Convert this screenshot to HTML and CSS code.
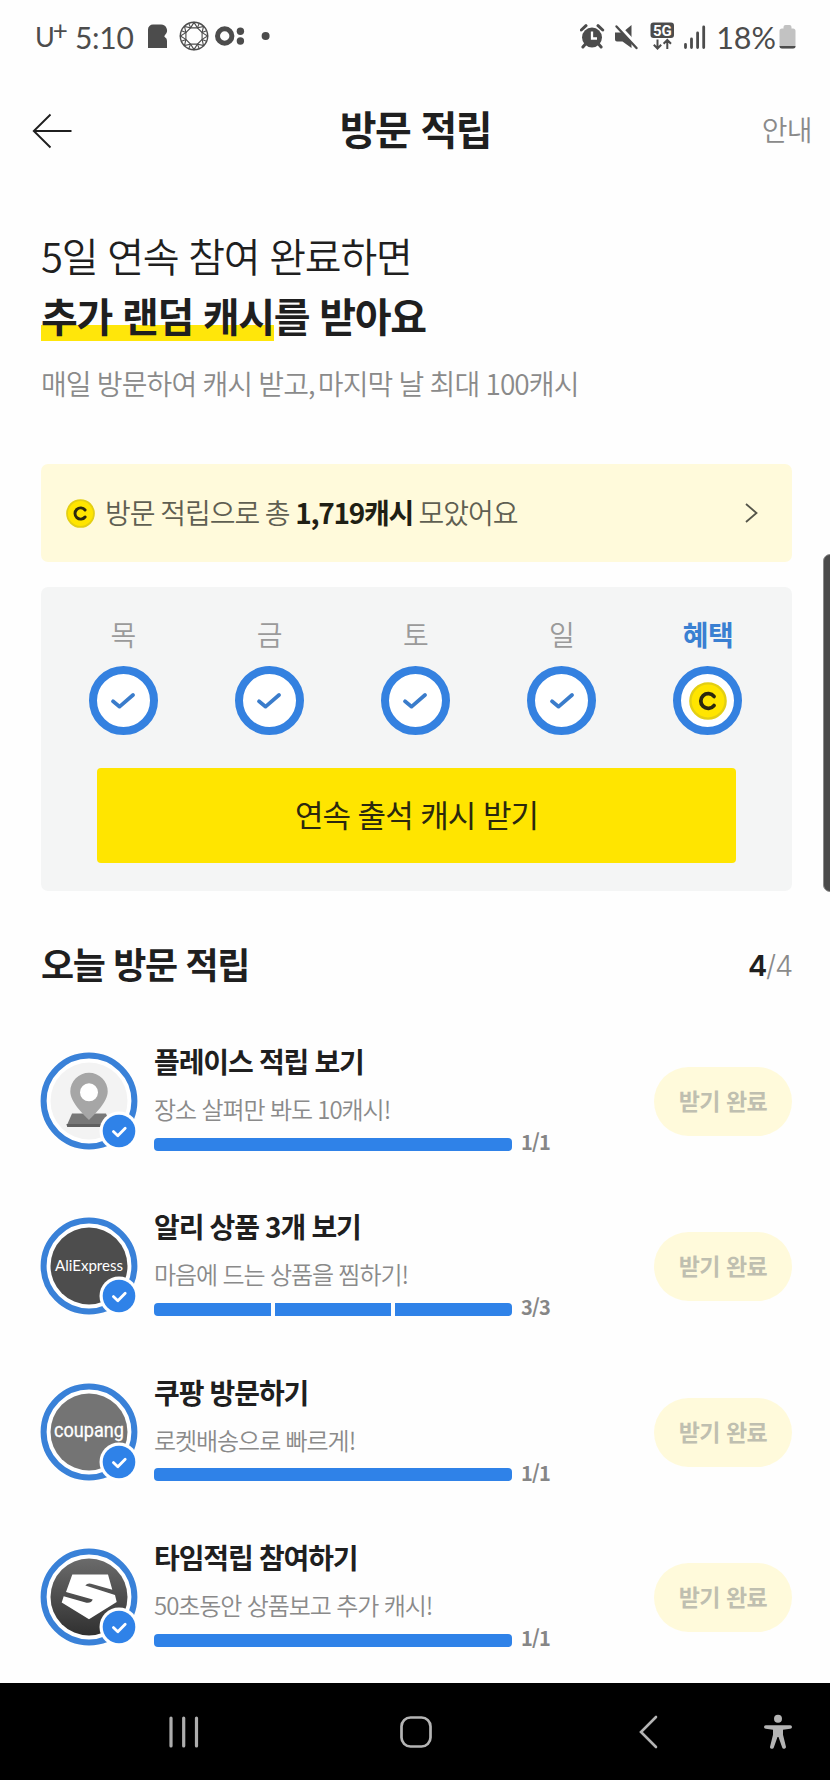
FILE: index.html
```html
<!DOCTYPE html>
<html lang="ko">
<head>
<meta charset="utf-8">
<title>방문 적립</title>
<link rel="stylesheet" href="styles.css">
</head>
<body>
<svg width="0" height="0" class="defs">
  <defs>
    <linearGradient id="dark" x1="0" y1="0" x2="0" y2="1"><stop offset="0" stop-color="#6b6b6b"/><stop offset="1" stop-color="#303030"/></linearGradient>
    <symbol id="coin" viewBox="0 0 38 38">
      <circle cx="19" cy="19" r="17.6" fill="#ffe500" stroke="#e3cf14" stroke-width="2.4"/>
      <path d="M25 14.4A7.4 7.4 0 1 0 25 23.6" fill="none" stroke="#2b280e" stroke-width="3.8" stroke-linecap="round"/>
    </symbol>
    <symbol id="check" viewBox="0 0 24 16"><path d="M2 8.3l6.6 5.4L22 2" fill="none" stroke="currentColor" stroke-width="3.7" stroke-linecap="round" stroke-linejoin="round"/></symbol>
    <symbol id="ring" viewBox="0 0 98 98">
      <circle cx="49" cy="49" r="45.4" fill="#fff" stroke="#3981d8" stroke-width="6"/>
    </symbol>
    <symbol id="done" viewBox="0 0 98 98">
      <circle cx="79" cy="79" r="19.5" fill="#fff"/>
      <circle cx="79" cy="79" r="16.3" fill="#2f82e8"/>
      <path d="M73.400 79.600l4.400 4.200 7.400-7.600" fill="none" stroke="#fff" stroke-width="2.800" stroke-linecap="round" stroke-linejoin="round"/>
    </symbol>
  </defs>
</svg>
<div class="screen">
  <div class="status">
    <div class="status-left">
      <span class="carrier">U<span class="plus">+</span></span><span class="clock">5:10</span>
      <svg class="notif" width="124" height="32" viewBox="0 0 124 32" fill="#4c4c4c">
        <path d="M0 27V8.500a5 5 0 0 1 5-5h8a6 6 0 0 1 4.200 10.300Q15.400 15.300 17 16.300A4 4 0 0 1 19 20v7z"/>
        <g fill="none" stroke="#4c4c4c" stroke-width="1.100">
          <circle cx="46" cy="15" r="13.700" stroke-width="1.400"/>
          <path d="M42.600 6.900h6.800l4.700 4.700v6.800l-4.700 4.700h-6.800l-4.700-4.700v-6.800z"/>
          <path d="M42.600 6.900L46 1.400l3.400 5.500 6.100-1.500-1.400 6.200 5.500 3.400-5.500 3.400 1.400 6.200-6.100-1.500-3.400 5.500-3.400-5.500-6.100 1.500 1.400-6.200-5.500-3.400 5.500-3.400-1.400-6.200z"/>
          <path d="M42.600 6.900l-1.800-4.500M49.400 6.900l1.800-4.500M54.100 11.600l4.400-1.900M54.100 18.400l4.400 1.900M49.400 23.100l1.800 4.500M42.600 23.100l-1.800 4.500M37.900 18.400l-4.400 1.900M37.900 11.600l-4.400-1.900"/>
        </g>
        <circle cx="76.700" cy="15" r="7.200" fill="none" stroke="#4c4c4c" stroke-width="5"/>
        <circle cx="92.400" cy="10.300" r="3.700"/><circle cx="92.400" cy="20" r="3.700"/>
        <circle cx="117.600" cy="15" r="4"/>
      </svg>
    </div>
    <div class="status-right">
      <svg width="128" height="30" viewBox="0 0 128 30" fill="#4c4c4c">
        <circle cx="12" cy="15.500" r="10"/>
        <path d="M1.300 8L6 3.700M22.700 8L18 3.700M5.500 22l-2.600 3M18.500 22l2.600 3" stroke="#4c4c4c" stroke-width="3" stroke-linecap="round"/>
        <path d="M12 9.500v7h5" stroke="#fff" stroke-width="2.300" fill="none"/>
        <path d="M35 10.500h7.500L51.500 3v23L42.500 19.500H37q-2 0-2-2z"/>
        <path d="M37.500 2.500L58.500 25" stroke="#fff" stroke-width="3.500"/>
        <path d="M36.500 4.500L56.500 26" stroke="#4c4c4c" stroke-width="2.400" stroke-linecap="round"/>
        <rect x="70.500" y=".5" width="23.500" height="15.500" rx="3"/>
        <text x="82.300" y="13.700" class="net" text-anchor="middle">5G</text>
        <path d="M77.500 17.500v9M73.800 22.800l3.700 3.700 3.700-3.700M87.300 27v-9M83.600 21.700l3.700-3.700 3.700 3.700" fill="none" stroke="#4c4c4c" stroke-width="2"/>
        <path d="M105.500 22.500v3M111.500 17v8.500M117.600 11v14.500M123.700 5v20.500" stroke="#4c4c4c" stroke-width="2.800" stroke-linecap="round"/>
      </svg>
      <span class="percent">18%</span>
      <svg width="17" height="24" viewBox="0 0 17 24"><path d="M4.500 2a2 2 0 0 1 2-2h4a2 2 0 0 1 2 2v1.500h1.500a2.500 2.500 0 0 1 2.500 2.500V21a2.500 2.500 0 0 1-2.500 2.500H3A2.500 2.500 0 0 1 .5 21V6A2.500 2.500 0 0 1 3 3.500h1.500z" fill="#c2c2c2"/><path d="M.5 21h16q0 2.500-2.500 2.500H3Q.5 23.500.5 21z" fill="#4c4c4c"/></svg>
    </div>
  </div>

  <header class="header">
    <svg class="back" width="41" height="36" viewBox="0 0 41 36"><path d="M39.500 18H2M18.500 1.500L1.800 18l16.700 16.500" fill="none" stroke="#1f1f1f" stroke-width="1.900"/></svg>
    <h1 class="title">방문 적립</h1>
    <span class="guide">안내</span>
  </header>

  <section class="intro">
    <p class="lead">5일 연속 참여 완료하면</p>
    <p class="lead strong"><span class="mark">추가 랜덤 캐시</span>를 받아요</p>
    <p class="sub">매일 방문하여 캐시 받고<span class="comma">,</span> 마지막 날 최대 100캐시</p>
  </section>

  <a class="total">
    <svg width="29" height="29"><use href="#coin"/></svg>
    <span class="total-text">방문 적립으로 총 <b>1,719캐시</b> 모았어요</span>
    <svg class="chev" width="13" height="20" viewBox="0 0 13 20"><path d="M1 1l10.500 9L1 19" fill="none" stroke="#55554a" stroke-width="1.800"/></svg>
  </a>

  <section class="streak">
    <div class="days">
      <div class="day"><span>목</span><div class="dot"><svg width="24" height="16"><use href="#check"/></svg></div></div>
      <div class="day"><span>금</span><div class="dot"><svg width="24" height="16"><use href="#check"/></svg></div></div>
      <div class="day"><span>토</span><div class="dot"><svg width="24" height="16"><use href="#check"/></svg></div></div>
      <div class="day"><span>일</span><div class="dot"><svg width="24" height="16"><use href="#check"/></svg></div></div>
      <div class="day bonus"><span>혜택</span><div class="dot"><svg width="38" height="38"><use href="#coin"/></svg></div></div>
    </div>
    <div class="claim">연속 출석 캐시 받기</div>
  </section>

  <div class="list-head"><h2>오늘 방문 적립</h2><span class="count"><b>4</b>/4</span></div>

  <section class="missions">
    <div class="mission">
      <svg class="avatar" viewBox="0 0 98 98"><use href="#ring"/>
        <circle cx="49" cy="49" r="38.500" fill="#f3f3f3"/>
        <path d="M32 61.500h34l5 12V75H27v-2z" fill="#787878"/><path d="M26.500 72h45v2q0 1-1.500 1H29q-2.500 0-2.500-3z" fill="#606060"/>
        <path d="M49 68C43 62 30.300 50 30.300 39.500a18.700 18.700 0 0 1 37.400 0C67.700 50 55 62 49 68z" fill="#a6a6a6"/>
        <circle cx="49" cy="40.300" r="9" fill="#fff"/><use href="#done"/></svg>
      <div class="body"><h3>플레이스 적립 보기</h3><p>장소 살펴만 봐도 10캐시!</p>
        <div class="progress"><div class="bar"><i></i></div><span>1/1</span></div></div>
      <div class="pill">받기 완료</div>
    </div>
    <div class="mission">
      <svg class="avatar" viewBox="0 0 98 98"><use href="#ring"/>
        <circle cx="49" cy="49" r="38.500" fill="#4d4d4d"/>
        <text x="49" y="53.500" text-anchor="middle" textLength="68" lengthAdjust="spacingAndGlyphs" class="ali">AliExpress</text><use href="#done"/></svg>
      <div class="body"><h3>알리 상품 3개 보기</h3><p>마음에 드는 상품을 찜하기!</p>
        <div class="progress"><div class="bar"><i></i><i></i><i></i></div><span>3/3</span></div></div>
      <div class="pill">받기 완료</div>
    </div>
    <div class="mission">
      <svg class="avatar" viewBox="0 0 98 98"><use href="#ring"/>
        <circle cx="49" cy="49" r="38.500" fill="#747474"/>
        <text x="49" y="54" text-anchor="middle" textLength="70" lengthAdjust="spacingAndGlyphs" class="coupang">coupang</text><use href="#done"/></svg>
      <div class="body"><h3>쿠팡 방문하기</h3><p>로켓배송으로 빠르게!</p>
        <div class="progress"><div class="bar"><i></i></div><span>1/1</span></div></div>
      <div class="pill">받기 완료</div>
    </div>
    <div class="mission">
      <svg class="avatar" viewBox="0 0 98 98"><use href="#ring"/>
        <circle cx="49" cy="49" r="38.500" fill="url(#dark)"/>
        <path d="M32.300 26.500H68L72.300 41.700 51 35.700q-3.700-.8-5.700 1.800L75 46.900l1.700 7L49 71.300 21.700 54.500l2-6.200L46.500 54.700q4.700.8 6.200-3.200L26 43.900z" fill="#fff"/><use href="#done"/></svg>
      <div class="body"><h3>타임적립 참여하기</h3><p>50초동안 상품보고 추가 캐시!</p>
        <div class="progress"><div class="bar"><i></i></div><span>1/1</span></div></div>
      <div class="pill">받기 완료</div>
    </div>
  </section>

  <nav class="nav">
    <svg width="30" height="32" viewBox="0 0 30 32"><path d="M2 2v28M14.700 2v28M27.500 2v28" stroke="#adadad" stroke-width="3.200" stroke-linecap="round"/></svg>
    <svg width="32" height="32" viewBox="0 0 32 32"><rect x="1.500" y="1.500" width="29" height="29" rx="9" fill="none" stroke="#b4b4b4" stroke-width="2.700"/></svg>
    <svg width="19" height="34" viewBox="0 0 19 34"><path d="M17 2L2 17l15 15" fill="none" stroke="#b4b4b4" stroke-width="2.600" stroke-linecap="round"/></svg>
    <svg width="28" height="35" viewBox="0 0 28 35" fill="#b4b4b4"><circle cx="14" cy="4.700" r="4"/><path d="M1.800 11.200h24.400a1.800 1.800 0 0 1 0 3.600L19 15.800v5l2.900 11.600a1.900 1.900 0 0 1-3.700 1L14.500 23h-1l-3.700 10.400a1.900 1.900 0 0 1-3.700-1L9 20.800v-5l-7.200-1a1.800 1.800 0 0 1 0-3.600z"/></svg>
  </nav>
  <div class="edge"></div>
</div>
</body>
</html>
```
FILE: styles.css
```css
* { box-sizing: border-box; margin: 0; padding: 0; }
body { background: #fefefe; font-family: "Noto Sans CJK KR", sans-serif; color: #1f1f1f; }
svg { display: block; flex: none; }
.defs { position: absolute; }
.screen { position: relative; width: 830px; height: 1780px; display: flex; flex-direction: column; overflow: hidden; white-space: nowrap; }
.screen > * { flex-shrink: 0; }
.status { height: 74px; display: flex; justify-content: space-between; padding: 0 34px 0 35px; color: #4c4c4c; font-family: Lato, sans-serif; font-size: 30px; line-height: 74px; }
.status-left, .status-right { display: flex; align-items: center; }
.carrier { width: 40px; font-size: 27px; letter-spacing: -2px; }
.plus { font-size: 26px; position: relative; top: -7px; }
.clock { width: 73px; letter-spacing: -0.3px; }
.status-right .percent { margin: 0 3px 0 8px; font-size: 30.5px; }
.net { font: bold 15px Roboto, sans-serif; fill: #fff; }

.header { height: 114px; display: grid; grid-template-columns: 140px 1fr 140px; align-items: center; padding: 0 18px; }
.back { margin-left: 14px; }
.title { text-align: center; font-size: 40px; line-height: 60px; letter-spacing: -1.35px; padding: 0 0 6px 1px; }
.guide { text-align: right; font-size: 28px; letter-spacing: -0.6px; color: #8a8a8a; font-weight: 350; padding-bottom: 5px; }

.intro { padding: 37px 41px 0; }
.lead { font-size: 40px; line-height: 60px; letter-spacing: -1.25px; font-weight: 350; }
.strong { font-weight: 700; letter-spacing: -1.3px; }
.mark { background: linear-gradient(#ffe60a, #ffe60a) 0 39px / 100% 16px no-repeat; }
.sub { margin-top: 17px; font-size: 28px; line-height: 42px; letter-spacing: -0.9px; word-spacing: -0.8px; color: #8a8a8a; font-weight: 350; }
.comma { margin-right: -3px; }

.total { margin: 60px 38px 0 41px; height: 98px; border-radius: 7px; background: #fffadb; display: flex; align-items: center; padding: 0 34px 0 25px; }
.total-text { flex: 1; margin-left: 10px; padding-bottom: 2px; font-size: 28px; letter-spacing: -1px; word-spacing: -1.2px; color: #5f5f52; font-weight: 350; }
.total-text b { color: #1f1f14; font-weight: 700; letter-spacing: -1.3px; }

.streak { margin: 25px 38px 0 41px; height: 304px; border-radius: 7px; background: #f4f5f5; padding: 26px 11px 0 9px; }
.days { display: grid; grid-template-columns: repeat(5, 1fr); }
.day { display: flex; flex-direction: column; align-items: center; font-size: 28px; line-height: 42px; color: #9a9a9a; font-weight: 350; letter-spacing: -0.6px; }
.bonus { color: #3a80d2; font-weight: 700; }
.dot { margin-top: 11px; width: 69px; height: 69px; border-radius: 50%; border: 8px solid #3481e0; background: #fff; display: flex; align-items: center; justify-content: center; color: #3a7ccb; }
.claim { margin: 33px 45px 0 47px; height: 95px; border-radius: 4px; background: #ffe500; text-align: center; font-size: 31px; line-height: 91px; letter-spacing: -1px; color: #2b280e; }

.list-head { margin: 47px 38px 0 41px; height: 54px; display: flex; justify-content: space-between; align-items: center; }
h2 { font-size: 36px; letter-spacing: -1.35px; line-height: 54px; padding-bottom: 4px; }
.count { font-size: 29px; font-family: Inter, sans-serif; letter-spacing: -1.2px; font-weight: 300; color: #8a8a8a; }
.count b { color: #1f1f1f; font-weight: 600; }

.screen > .missions { padding: 41px 38px 0 41px; flex: 1 1 0; min-height: 0; overflow: hidden; }
.mission { height: 165.400px; display: flex; align-items: flex-start; }
.avatar { width: 98px; height: 98px; margin: 19px 1px 0 -1px; }
.body { width: 420px; margin-left: 15px; padding-top: 7px; }
h3 { font-size: 28px; line-height: 42px; letter-spacing: -1.1px; word-spacing: -0.5px; }
.body p { margin-top: 9px; font-size: 24px; line-height: 36px; letter-spacing: -1.05px; word-spacing: -0.3px; color: #8a8a8a; font-weight: 350; }
.progress { display: flex; align-items: center; height: 32px; margin-top: 1px; }
.bar { width: 358px; height: 13px; border-radius: 4px; overflow: hidden; display: flex; gap: 4px; }
.bar i { flex: 1; background: #2f82e8; }
.progress span { margin: -5px 0 0 9px; font-size: 20px; letter-spacing: -0.8px; color: #868686; font-weight: 700; }
.pill { margin: 34px 0 0 auto; width: 138px; height: 69px; border-radius: 35px; background: #fffadb; text-align: center; font-size: 23px; line-height: 66px; letter-spacing: -0.5px; font-weight: 700; color: #bfbfb0; }
.ali { font: 15.500px Lato, sans-serif; fill: #fff; }
.coupang { font: 400 20.500px Roboto, sans-serif; fill: #fff; stroke: #fff; stroke-width: .3px; }

.nav { height: 97px; background: #000; display: flex; align-items: center; padding: 0 38px 0 169px; }
.nav svg:nth-child(2) { margin-left: 201px; }
.nav svg:nth-child(3) { margin-left: 207px; }
.nav svg:nth-child(4) { margin-left: auto; }
.edge { position: absolute; right: -8px; top: 554px; width: 15px; height: 338px; border-radius: 7px; background: #4b4b4b; border: 1px solid #8a8a8a; }
```
